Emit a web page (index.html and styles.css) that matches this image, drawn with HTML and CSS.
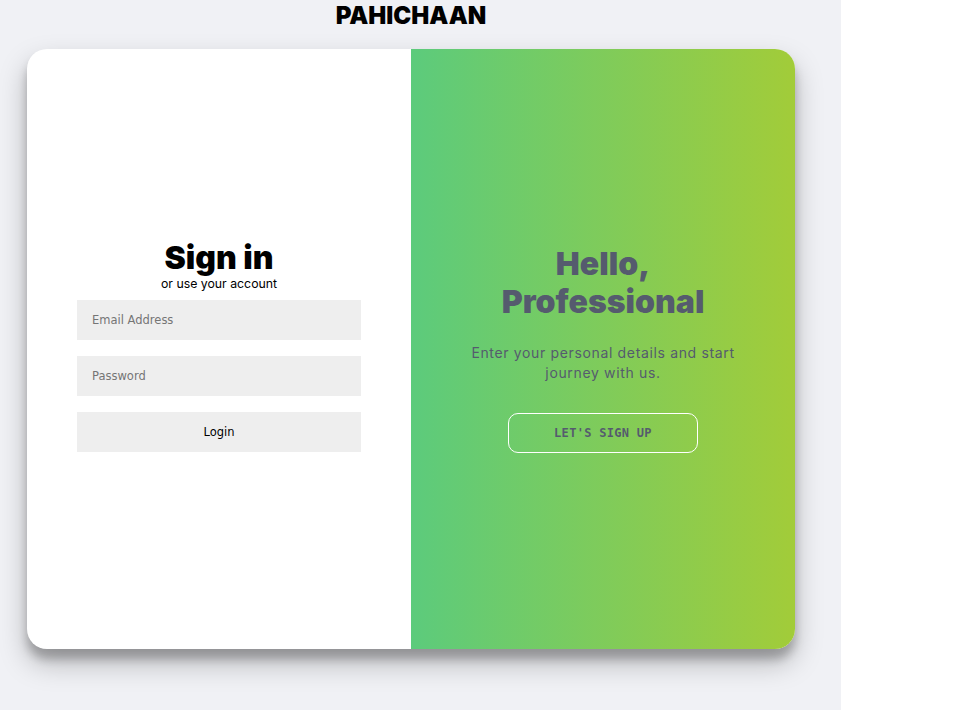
FILE: index.html
```html
<!DOCTYPE html>
<html lang="en">
<head>
<meta charset="utf-8">
<title>Pahichaan</title>
<link rel="stylesheet" href="styles.css">
</head>
<body>
<div class="page">
  <h1 class="brand">PAHICHAAN</h1>
  <div class="card">
    <form class="signin">
      <h2 class="signin-title">Sign in</h2>
      <span class="signin-sub">or use your account</span>
      <input class="field" type="email" placeholder="Email Address">
      <input class="field" type="password" placeholder="Password">
      <button class="login" type="button">Login</button>
    </form>
    <div class="overlay">
      <h2 class="overlay-title">Hello,<br>Professional</h2>
      <p class="overlay-text">Enter your personal details and start journey with us.</p>
      <button class="ghost" type="button">LET'S SIGN UP</button>
    </div>
  </div>
</div>
</body>
</html>
```
FILE: styles.css
```css
html { background: #fff; }
body { margin: 0; }
.page {
  width: 841px;
  min-height: 710px;
  box-sizing: border-box;
  padding-right: 19px;
  background: #f0f1f5;
  display: flex;
  flex-direction: column;
  align-items: center;
}
.brand {
  margin: 4px 0 0;
  height: 45px;
  font-family: Inter, "DejaVu Sans", sans-serif;
  font-weight: 900;
  font-size: 24px;
  line-height: 24px;
  color: #000;
}
.card {
  width: 768px;
  height: 600px;
  border-radius: 20px;
  overflow: hidden;
  background: #fff;
  box-shadow: 0 14px 28px rgba(0,0,0,.25), 0 10px 10px rgba(0,0,0,.22);
  display: grid;
  grid-template-columns: 384px 384px;
}
.signin {
  display: flex;
  flex-direction: column;
  align-items: center;
  justify-content: center;
  padding: 0 50px 6px;
}
.signin-title {
  margin: 0;
  font-family: Inter, "DejaVu Sans", sans-serif;
  font-weight: 900;
  font-size: 32px;
  line-height: 36px;
  color: #000;
}
.signin-sub {
  font-family: Inter, "DejaVu Sans", sans-serif;
  font-size: 12.3px;
  line-height: 16px;
  color: #000;
  margin-bottom: 8px;
}
.field, .login {
  width: 284px;
  height: 40px;
  box-sizing: border-box;
  border: none;
  background: #eee;
  font-family: "DejaVu Sans", sans-serif;
  font-size: 11.5px;
  outline: none;
}
.field {
  padding: 0 15px;
  margin-bottom: 16px;
}
.field::placeholder { color: #757575; }
.login {
  color: #000;
  text-align: center;
}
.overlay {
  background: linear-gradient(to right, #5ccb7c, #a2cc39);
  display: flex;
  flex-direction: column;
  align-items: center;
  justify-content: center;
  text-align: center;
  padding: 0 40px;
  color: #555b6e;
}
.overlay-title {
  margin: 0;
  font-family: Inter, "DejaVu Sans", sans-serif;
  font-weight: 900;
  font-size: 32px;
  line-height: 38px;
}
.overlay-text {
  margin: 22px 0 30px;
  font-family: Inter, "DejaVu Sans", sans-serif;
  font-size: 14px;
  line-height: 20px;
  letter-spacing: 0.65px;
}
.ghost {
  width: 190px;
  height: 40px;
  border: 1px solid #fff;
  border-radius: 10px;
  background: transparent;
  color: #555b6e;
  font-family: "DejaVu Sans Mono", monospace;
  font-weight: bold;
  font-size: 12px;
  letter-spacing: 0.3px;
}
```
